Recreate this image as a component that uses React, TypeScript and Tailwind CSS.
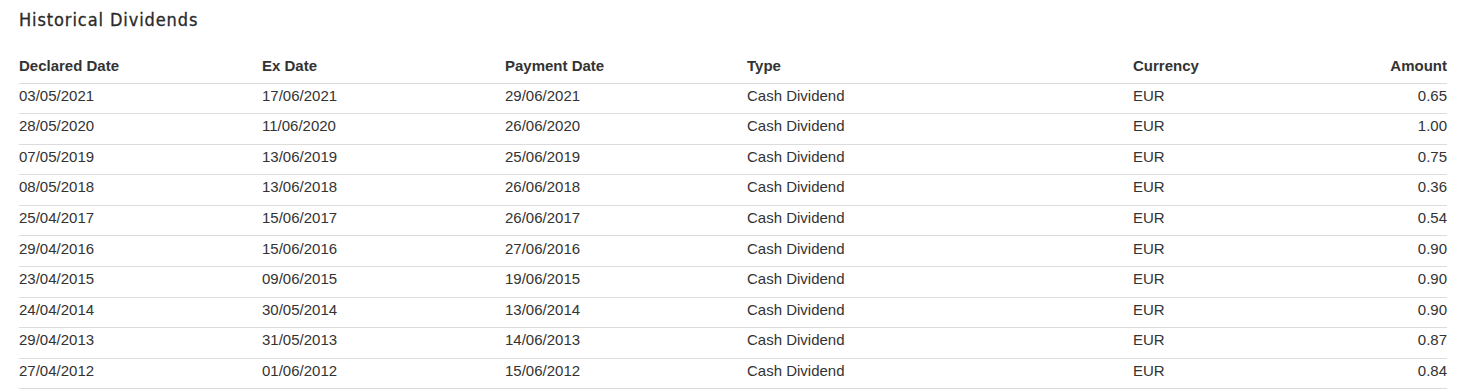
const rows = [
  ['03/05/2021', '17/06/2021', '29/06/2021', 'Cash Dividend', 'EUR', '0.65'],
  ['28/05/2020', '11/06/2020', '26/06/2020', 'Cash Dividend', 'EUR', '1.00'],
  ['07/05/2019', '13/06/2019', '25/06/2019', 'Cash Dividend', 'EUR', '0.75'],
  ['08/05/2018', '13/06/2018', '26/06/2018', 'Cash Dividend', 'EUR', '0.36'],
  ['25/04/2017', '15/06/2017', '26/06/2017', 'Cash Dividend', 'EUR', '0.54'],
  ['29/04/2016', '15/06/2016', '27/06/2016', 'Cash Dividend', 'EUR', '0.90'],
  ['23/04/2015', '09/06/2015', '19/06/2015', 'Cash Dividend', 'EUR', '0.90'],
  ['24/04/2014', '30/05/2014', '13/06/2014', 'Cash Dividend', 'EUR', '0.90'],
  ['29/04/2013', '31/05/2013', '14/06/2013', 'Cash Dividend', 'EUR', '0.87'],
  ['27/04/2012', '01/06/2012', '15/06/2012', 'Cash Dividend', 'EUR', '0.84'],
]

export default function App() {
  return (
    <div className="min-h-[389px] bg-white pl-[19px] pr-[10px] pt-[8px] font-['Liberation_Sans',Arial,sans-serif] text-[#333]">
      <h2 className="font-['DejaVu_Sans_Condensed','DejaVu_Sans',sans-serif] text-[18px] leading-[24px] tracking-[0.9px] text-[#2a2a2a] [-webkit-text-stroke:0.3px_#2a2a2a]">
        Historical Dividends
      </h2>
      <table className="mt-[18px] w-full border-collapse text-[15px]">
        <thead>
          <tr className="h-[33px] border-b border-[#dcdcdc]">
            <th className="w-[243px] text-left align-middle font-bold">Declared Date</th>
            <th className="w-[243px] text-left align-middle font-bold">Ex Date</th>
            <th className="w-[242px] text-left align-middle font-bold">Payment Date</th>
            <th className="w-[386px] text-left align-middle font-bold">Type</th>
            <th className="text-left align-middle font-bold">Currency</th>
            <th className="text-right align-middle font-bold">Amount</th>
          </tr>
        </thead>
        <tbody>
          {rows.map((r) => (
            <tr key={r[0]} className="h-[30.6px] border-b border-[#dcdcdc]">
              <td className="pb-[5px] align-middle">{r[0]}</td>
              <td className="pb-[5px] align-middle">{r[1]}</td>
              <td className="pb-[5px] align-middle">{r[2]}</td>
              <td className="pb-[5px] align-middle">{r[3]}</td>
              <td className="pb-[5px] align-middle">{r[4]}</td>
              <td className="pb-[5px] text-right align-middle">{r[5]}</td>
            </tr>
          ))}
        </tbody>
      </table>
    </div>
  )
}
